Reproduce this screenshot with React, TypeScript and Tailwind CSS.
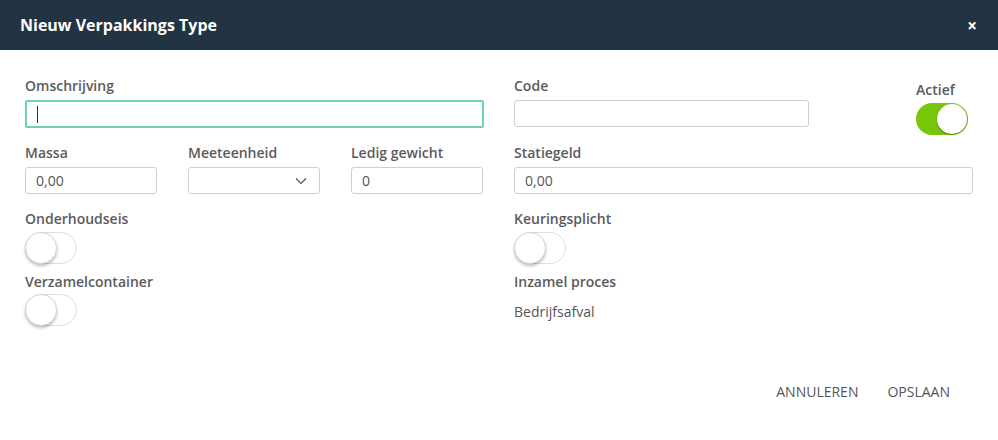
import React from "react";

const font = { fontFamily: '"Open Sans", "Noto Sans", sans-serif' };

function Label({ children }: { children: React.ReactNode }) {
  return <div className="h-5 text-[14px] leading-5 font-semibold text-[#5b5b5b]">{children}</div>;
}

function Input({ value = "", className = "" }: { value?: string; className?: string }) {
  return (
    <div className={`h-[27px] rounded-[3px] border border-[#cfcfcf] bg-white flex items-center pl-[10px] text-[14px] text-[#555] ${className}`}>
      {value}
    </div>
  );
}

function Toggle({ on = false }: { on?: boolean }) {
  if (on) {
    return (
      <div className="relative w-[52px] h-[32px] rounded-full bg-[#78c60a]">
        <div className="absolute right-[1px] top-[1px] w-[30px] h-[30px] rounded-full bg-white shadow-[0_1px_2px_rgba(0,0,0,0.35)]" />
      </div>
    );
  }
  return (
    <div className="relative w-[52px] h-[32px] rounded-full bg-white border border-[#dedede]">
      <div className="absolute left-[-1px] top-[-1px] w-[32px] h-[32px] rounded-full bg-white border border-[#d6d6d6] shadow-[0_2px_3px_rgba(0,0,0,0.25)]" />
    </div>
  );
}

export default function App() {
  return (
    <div className="w-[998px] h-[440px] bg-white" style={font}>
      <div className="h-[50px] bg-[#223343] flex items-center justify-between pl-[20px] pr-[21px]">
        <div className="text-white text-[16px] font-bold">Nieuw Verpakkings Type</div>
        <div className="text-white text-[17px] font-bold leading-none">×</div>
      </div>
      <div className="pl-[25px] pt-[26px]">
        {/* Row 1 */}
        <div className="flex h-[51px] items-start">
          <div className="w-[459px]">
            <Label>Omschrijving</Label>
            <div className="mt-[4px] h-[28px] rounded-[2px] border-2 border-[#6fd3b3] flex items-center pl-[10px]">
              <div className="w-[1px] h-[17px] bg-[#333]" />
            </div>
          </div>
          <div className="ml-[30px] w-[295px]">
            <Label>Code</Label>
            <Input className="mt-[4px]" />
          </div>
          <div className="ml-[107px] pt-[4px]">
            <Label>Actief</Label>
            <div className="mt-[3px]">
              <Toggle on />
            </div>
          </div>
        </div>
        {/* Row 2 */}
        <div className="flex mt-[16px]">
          <div className="w-[459px] flex gap-[31px]">
            <div className="w-[132px]">
              <Label>Massa</Label>
              <Input value="0,00" className="mt-[4px]" />
            </div>
            <div className="w-[132px]">
              <Label>Meeteenheid</Label>
              <div className="mt-[4px] h-[27px] rounded-[3px] border border-[#cfcfcf] flex items-center justify-end pr-[12px]">
                <svg width="12" height="8" viewBox="0 0 12 8" fill="none">
                  <path d="M1 1.5 L6 6.5 L11 1.5" stroke="#555" strokeWidth="1.2" />
                </svg>
              </div>
            </div>
            <div className="w-[132px]">
              <Label>Ledig gewicht</Label>
              <Input value="0" className="mt-[4px]" />
            </div>
          </div>
          <div className="ml-[30px] w-[459px]">
            <Label>Statiegeld</Label>
            <Input value="0,00" className="mt-[4px]" />
          </div>
        </div>
        {/* Row 3 */}
        <div className="flex mt-[15px]">
          <div className="w-[459px]">
            <Label>Onderhoudseis</Label>
            <div className="mt-[3px]"><Toggle /></div>
          </div>
          <div className="ml-[30px]">
            <Label>Keuringsplicht</Label>
            <div className="mt-[3px]"><Toggle /></div>
          </div>
        </div>
        {/* Row 4 */}
        <div className="flex mt-[8px]">
          <div className="w-[459px]">
            <Label>Verzamelcontainer</Label>
            <div className="mt-[2px]"><Toggle /></div>
          </div>
          <div className="ml-[30px]">
            <Label>Inzamel proces</Label>
            <div className="mt-[10px] text-[14px] leading-5 text-[#555]">Bedrijfsafval</div>
          </div>
        </div>
      </div>
      <div className="flex justify-end mt-[56px] pr-[48px] gap-[29px] text-[14px] text-[#555] leading-5">
        <div>ANNULEREN</div>
        <div>OPSLAAN</div>
      </div>
    </div>
  );
}
